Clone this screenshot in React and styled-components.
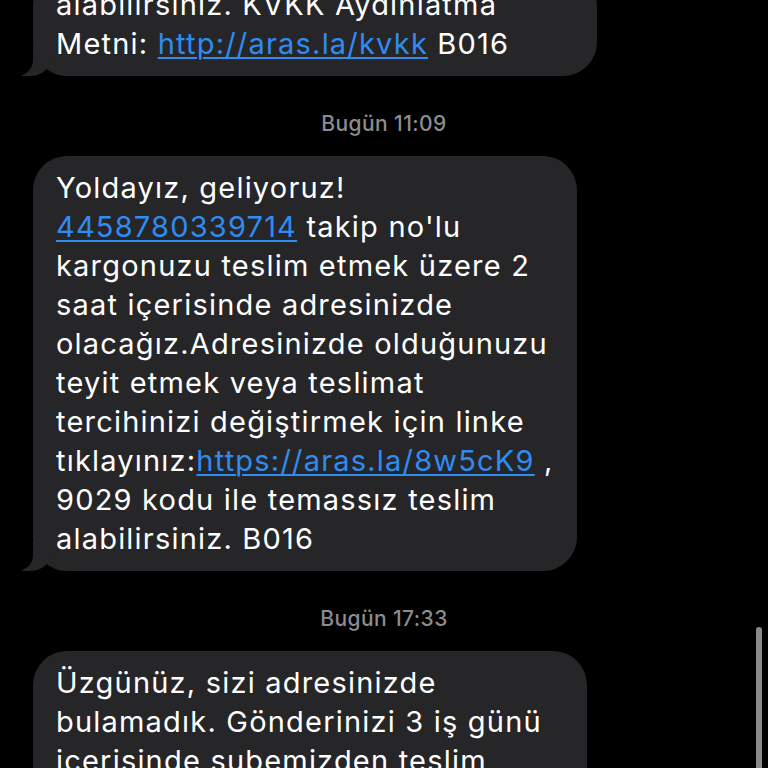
import React from "react";
import styled, { createGlobalStyle } from "styled-components";

const Global = createGlobalStyle`
  html, body {
    margin: 0;
    padding: 0;
    background: #000;
  }
  body {
    font-family: Inter, "Noto Sans", "Liberation Sans", sans-serif;
    -webkit-font-smoothing: antialiased;
  }
`;

const Screen = styled.div`
  position: relative;
  width: 768px;
  height: 768px;
  overflow: hidden;
  background: #000;
`;

const Thread = styled.div`
  display: flex;
  flex-direction: column;
  align-items: flex-start;
  padding: 0 0 0 33px;
  margin-top: -27px;
`;

const Bubble = styled.div`
  position: relative;
  box-sizing: border-box;
  width: ${(p) => p.$w}px;
  padding: 12px 10px 13px 23px;
  background: #262628;
  border-radius: 34px;
  color: #fff;
  font-size: 29px;
  line-height: 39px;
  letter-spacing: 1.2px;

  &::before {
    content: "";
    position: absolute;
    bottom: 0;
    left: -11px;
    width: 30px;
    height: 30px;
    background: #262628;
    border-bottom-right-radius: 22px 20px;
  }
  &::after {
    content: "";
    position: absolute;
    bottom: 0;
    left: -40px;
    width: 40px;
    height: 32px;
    background: #000;
    border-bottom-right-radius: 16px;
  }
`;

const Line = styled.div`
  position: relative;
  z-index: 1;
  white-space: nowrap;
`;

const Link = styled.span`
  color: #2f8cf0;
  text-decoration: underline;
  text-decoration-thickness: 2px;
  text-underline-offset: 3px;
`;

const Stamp = styled.div`
  align-self: stretch;
  margin: 37px 0 21px -33px;
  text-align: center;
  color: #8c8c91;
  font-size: 21px;
  font-weight: 500;
  line-height: 22px;
  letter-spacing: 0.4px;
`;

const ScrollBar = styled.div`
  position: absolute;
  right: 6px;
  top: 627px;
  width: 6px;
  height: 160px;
  border-radius: 3px;
  background: #8a8a8a;
`;

export default function App() {
  return (
    <Screen>
      <Global />
      <Thread>
        <Bubble $w={564}>
          <Line>alabilirsiniz. KVKK Aydınlatma</Line>
          <Line>
            Metni: <Link>http://aras.la/kvkk</Link> B016
          </Line>
        </Bubble>
        <Stamp>Bugün 11:09</Stamp>
        <Bubble $w={544}>
          <Line>Yoldayız, geliyoruz!</Line>
          <Line>
            <Link>4458780339714</Link> takip no'lu
          </Line>
          <Line>kargonuzu teslim etmek üzere 2</Line>
          <Line>saat içerisinde adresinizde</Line>
          <Line>olacağız.Adresinizde olduğunuzu</Line>
          <Line>teyit etmek veya teslimat</Line>
          <Line>tercihinizi değiştirmek için linke</Line>
          <Line>
            tıklayınız:<Link>https://aras.la/8w5cK9</Link> ,
          </Line>
          <Line>9029 kodu ile temassız teslim</Line>
          <Line>alabilirsiniz. B016</Line>
        </Bubble>
        <Stamp>Bugün 17:33</Stamp>
        <Bubble $w={554}>
          <Line>Üzgünüz, sizi adresinizde</Line>
          <Line>bulamadık. Gönderinizi 3 iş günü</Line>
          <Line>içerisinde şubemizden teslim</Line>
          <Line>alabilirsiniz.</Line>
        </Bubble>
      </Thread>
      <ScrollBar />
    </Screen>
  );
}
